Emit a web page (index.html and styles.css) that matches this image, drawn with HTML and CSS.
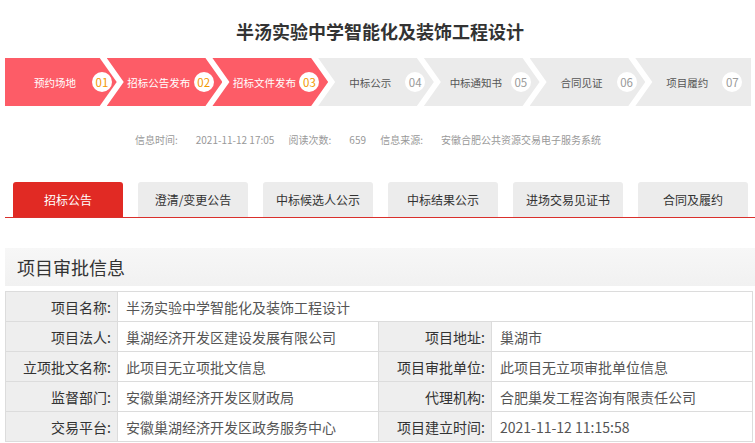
FILE: index.html
```html
<!DOCTYPE html>
<html lang="zh-CN">
<head>
<meta charset="utf-8">
<title>半汤实验中学智能化及装饰工程设计</title>
<link rel="stylesheet" href="styles.css">
</head>
<body>
<div class="page">
  <h1 class="title">半汤实验中学智能化及装饰工程设计</h1>

  <div class="steps">
    <div class="step done first"><span class="step-label">预约场地</span><span class="step-num">01</span></div>
    <div class="step done"><span class="step-label">招标公告发布</span><span class="step-num">02</span></div>
    <div class="step done"><span class="step-label">招标文件发布</span><span class="step-num">03</span></div>
    <div class="step"><span class="step-label">中标公示</span><span class="step-num">04</span></div>
    <div class="step"><span class="step-label">中标通知书</span><span class="step-num">05</span></div>
    <div class="step"><span class="step-label">合同见证</span><span class="step-num">06</span></div>
    <div class="step last"><span class="step-label">项目履约</span><span class="step-num">07</span></div>
  </div>

  <div class="meta">
    <span class="meta-label">信息时间:</span><span class="meta-value">2021-11-12 17:05</span>
    <span class="meta-label">阅读次数:</span><span class="meta-value">659</span>
    <span class="meta-label">信息来源:</span><span class="meta-value">安徽合肥公共资源交易电子服务系统</span>
  </div>

  <div class="tabs">
    <div class="tab active">招标公告</div>
    <div class="tab">澄清/变更公告</div>
    <div class="tab">中标候选人公示</div>
    <div class="tab">中标结果公示</div>
    <div class="tab">进场交易见证书</div>
    <div class="tab">合同及履约</div>
  </div>

  <div class="section-head">项目审批信息</div>

  <table class="info">
    <colgroup>
      <col class="c-label"><col class="c-value"><col class="c-label2"><col class="c-value">
    </colgroup>
    <tr>
      <th>项目名称:</th>
      <td colspan="3">半汤实验中学智能化及装饰工程设计</td>
    </tr>
    <tr>
      <th>项目法人:</th><td>巢湖经济开发区建设发展有限公司</td>
      <th>项目地址:</th><td>巢湖市</td>
    </tr>
    <tr>
      <th>立项批文名称:</th><td>此项目无立项批文信息</td>
      <th>项目审批单位:</th><td>此项目无立项审批单位信息</td>
    </tr>
    <tr>
      <th>监督部门:</th><td>安徽巢湖经济开发区财政局</td>
      <th>代理机构:</th><td>合肥巢发工程咨询有限责任公司</td>
    </tr>
    <tr>
      <th>交易平台:</th><td>安徽巢湖经济开发区政务服务中心</td>
      <th>项目建立时间:</th><td>2021-11-12 11:15:58</td>
    </tr>
  </table>
</div>
</body>
</html>
```

FILE: styles.css
```css
* { box-sizing: border-box; }

html, body {
  margin: 0;
  padding: 0;
  background: #fff;
  overflow: hidden;
}

body {
  font-family: "Microsoft YaHei", "Noto Sans CJK SC", "Noto Sans", sans-serif;
  color: #333;
}

.page {
  padding-left: 5px;
}

.title {
  margin: 0;
  padding-top: 18px;
  font-size: 18px;
  line-height: 26px;
  font-weight: bold;
  text-align: center;
  color: #333;
}

/* progress steps */
.steps {
  display: flex;
  width: 746px;
  height: 48px;
  margin-top: 14px;
}

.step {
  flex: 1 1 0;
  margin-right: -10px;
  display: flex;
  align-items: center;
  padding-left: 17px;
  background: #ebebeb;
  clip-path: polygon(0 0, calc(100% - 17px) 0, 100% 50%, calc(100% - 17px) 100%, 0 100%, 17px 50%);
}

.step.first {
  padding-left: 13px;
  clip-path: polygon(0 0, calc(100% - 17px) 0, 100% 50%, calc(100% - 17px) 100%, 0 100%);
}

.step.first .step-label {
  width: 74px;
}

.step.last {
  margin-right: 0;
  clip-path: polygon(0 0, 100% 0, 100% 100%, 0 100%, 17px 50%);
}

.step.done {
  background: #fd5c67;
}

.step-label {
  width: 70px;
  text-align: center;
  font-size: 10.5px;
  color: #555;
  white-space: nowrap;
}

.step.done .step-label {
  color: #fff;
}

.step-num {
  flex: none;
  width: 20px;
  height: 20px;
  border-radius: 50%;
  background: #fff;
  display: flex;
  align-items: center;
  justify-content: center;
  font-size: 11.5px;
  color: #9a9a9a;
}

.step.done .step-num {
  color: #f39800;
}

/* meta line */
.meta {
  margin-top: 26px;
  padding-right: 12px;
  height: 16px;
  line-height: 16px;
  text-align: center;
  font-size: 10px;
  color: #999;
  white-space: nowrap;
}

.meta-label {
  margin-right: 18px;
}

.meta-value {
  margin-right: 12px;
}

/* tabs */
.tabs {
  display: flex;
  gap: 15px;
  margin-top: 34px;
  padding-left: 8px;
  border-bottom: 1px solid #d9302c;
}

.tab {
  width: 110px;
  height: 35px;
  line-height: 35px;
  text-align: center;
  font-size: 12px;
  color: #333;
  background: #ececec;
  border-radius: 3px 3px 0 0;
}

.tab.active {
  background: #e12a24;
  color: #fff;
}

/* section */
.section-head {
  margin-top: 30px;
  height: 38px;
  line-height: 38px;
  padding-left: 12px;
  font-size: 18px;
  color: #333;
  background: linear-gradient(#f7f7f7, #f1f1f1);
}

.info {
  margin-top: 5px;
  width: 747px;
  border-collapse: collapse;
  table-layout: fixed;
  font-size: 14px;
}

.c-label { width: 112px; }
.c-label2 { width: 113px; }
.c-value { width: 261px; }

.info th,
.info td {
  height: 30px;
  border: 1px solid #dcdcdc;
  padding: 0 8px;
  white-space: nowrap;
  line-height: 28px;
}

.info th {
  background: #eeeeee;
  font-weight: normal;
  text-align: right;
  color: #333;
  padding-right: 6px;
}

.info td {
  text-align: left;
  color: #555;
}
```
